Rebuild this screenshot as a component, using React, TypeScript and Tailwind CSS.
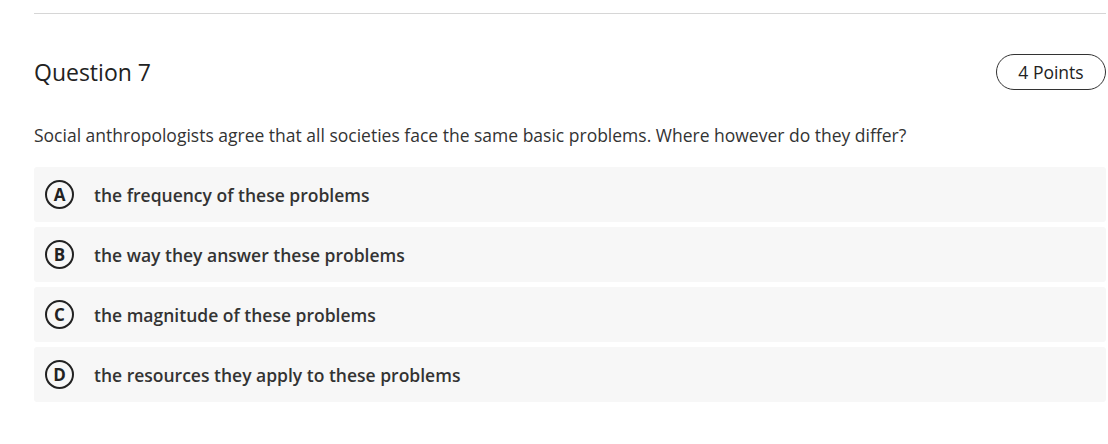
import React from 'react';

const options = [
  { key: 'A', text: 'the frequency of these problems' },
  { key: 'B', text: 'the way they answer these problems' },
  { key: 'C', text: 'the magnitude of these problems' },
  { key: 'D', text: 'the resources they apply to these problems' },
];

function Option({ letter, text }: { letter: string; text: string }) {
  return (
    <div className="flex h-[55px] items-center rounded-[3px] bg-[#f7f7f7] pl-[11px]">
      <div className="flex h-[29px] w-[29px] shrink-0 items-center justify-center rounded-full border-2 border-[#222] text-[17px] leading-none font-bold text-[#222]">
        {letter}
      </div>
      <span className="ml-[20px] text-[17.5px] font-semibold text-[#333]">{text}</span>
    </div>
  );
}

export default function App() {
  return (
    <div className="min-h-[444px] bg-white pl-[34px] pr-[2px] pt-[13px] font-['Open_Sans',sans-serif]">
      <div className="border-t border-[#d6d6d6]" />
      <div className="mt-[40px] flex items-center justify-between">
        <h2 className="text-[23px] font-normal text-[#222]">Question 7</h2>
        <span className="flex h-[36px] w-[110px] items-center justify-center rounded-full border border-[#333] text-[17.5px] text-[#222]">
          4 Points
        </span>
      </div>
      <p className="mt-[32px] text-[17.5px] text-[#333]">
        Social anthropologists agree that all societies face the same basic problems. Where however do they differ?
      </p>
      <div className="mt-[19px] flex flex-col gap-[5px]">
        {options.map((o) => (
          <Option key={o.key} letter={o.key} text={o.text} />
        ))}
      </div>
    </div>
  );
}
